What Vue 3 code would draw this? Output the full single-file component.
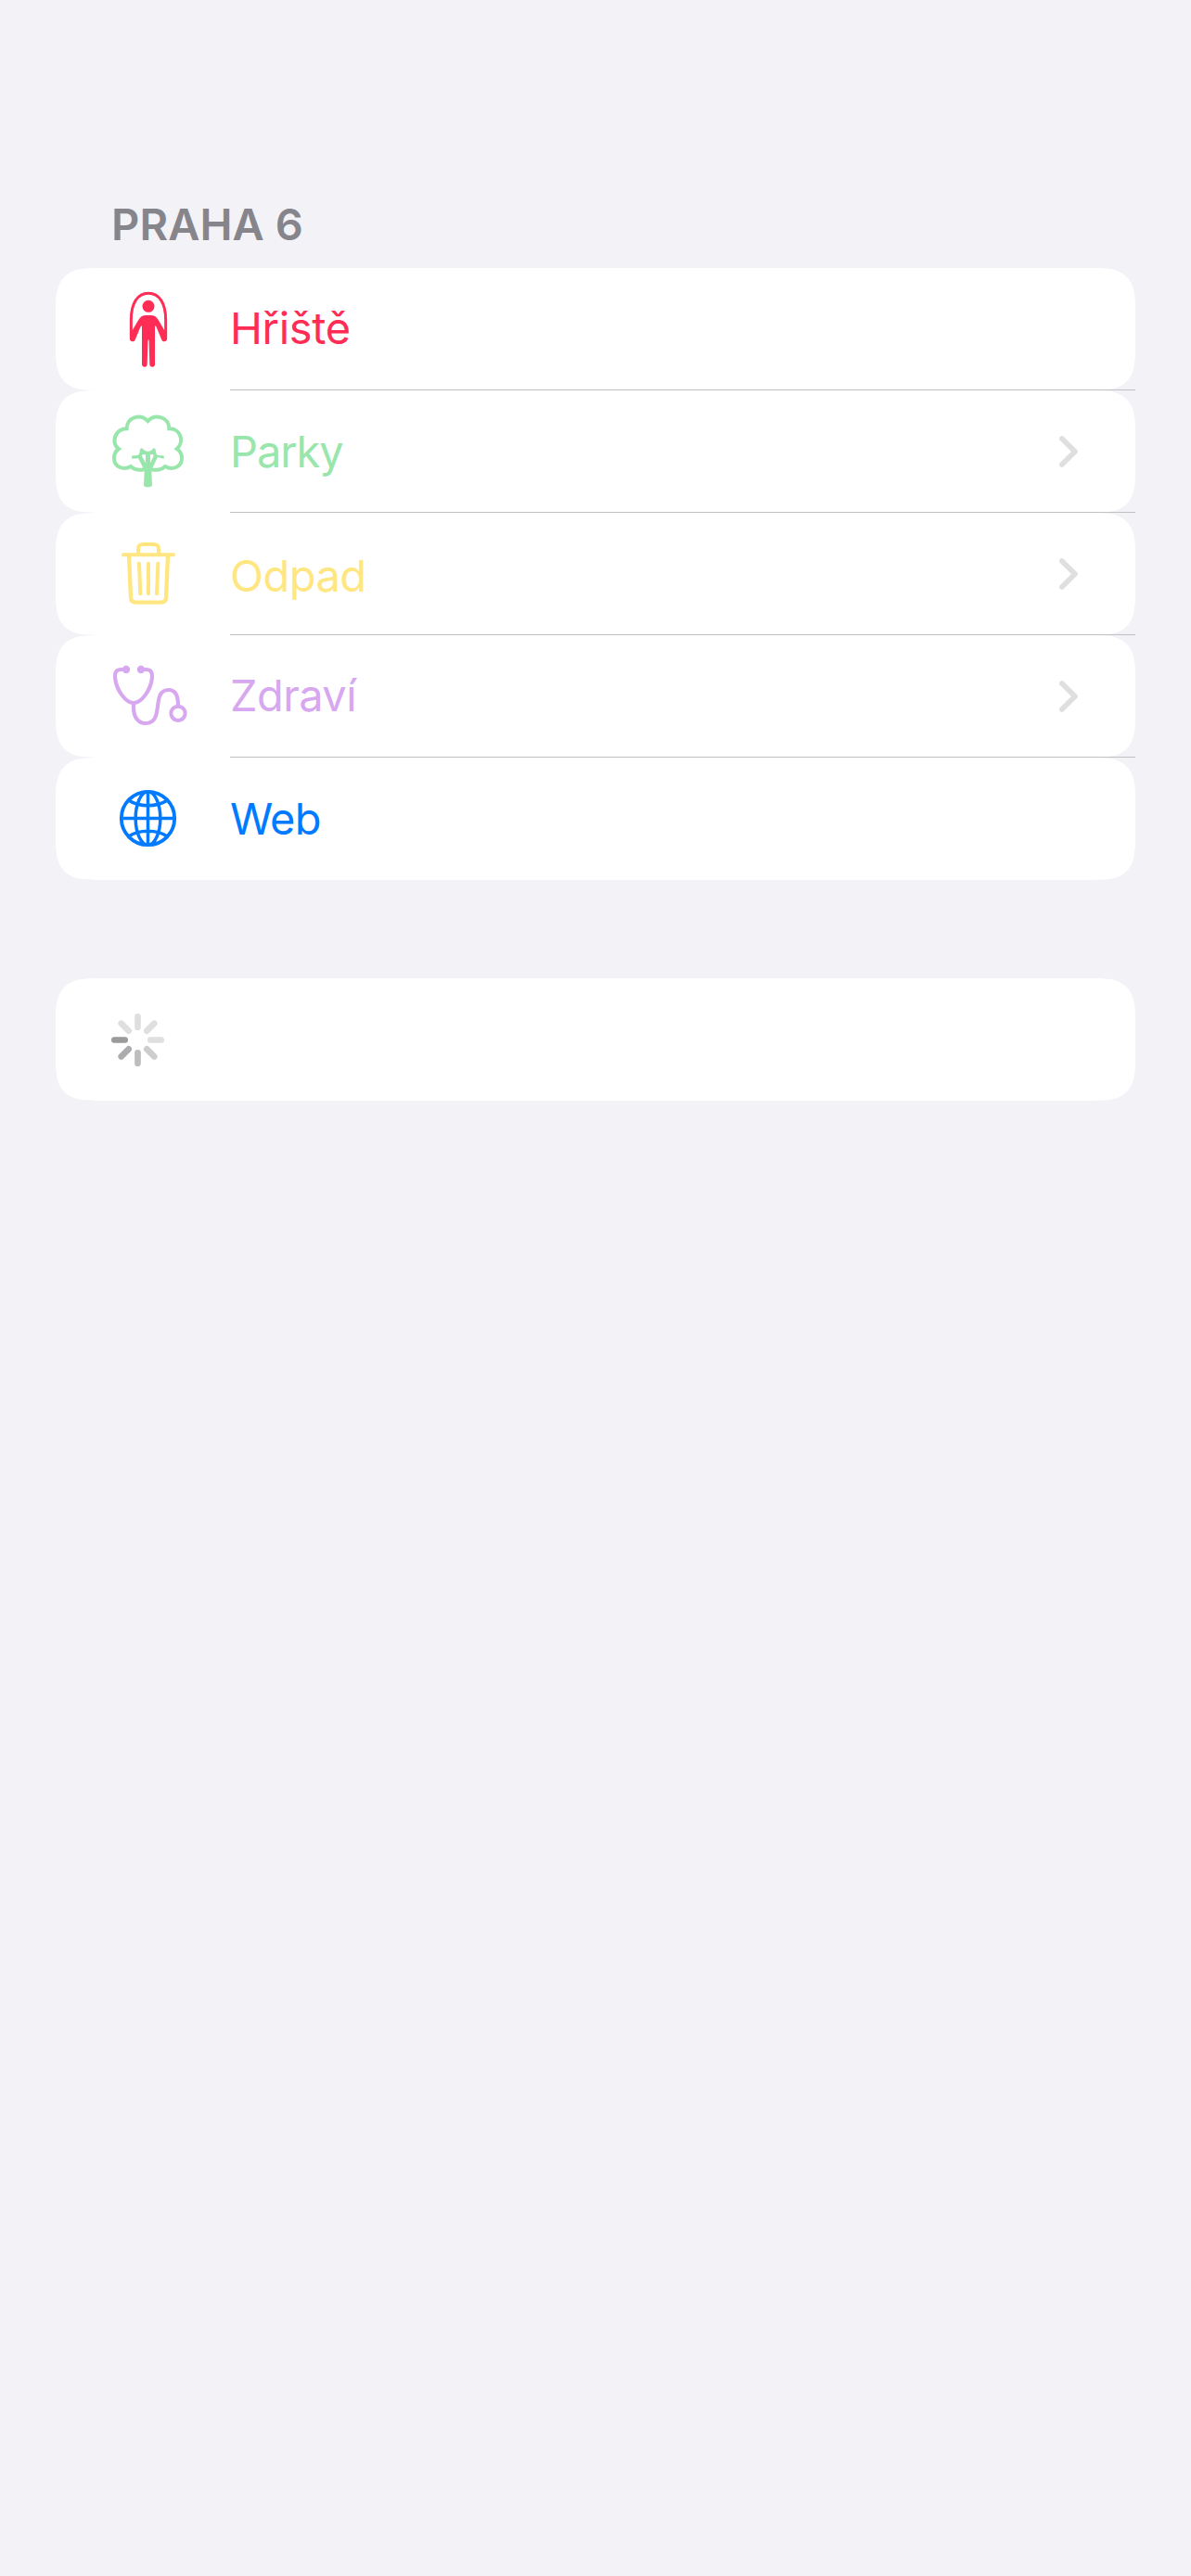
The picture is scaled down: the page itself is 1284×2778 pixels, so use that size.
<script setup>
const rows = [
  { id: 'playground', label: 'Hřiště', color: '#ff2d55', top: -33, shift: 0, spacing: -0.35, chevron: false },
  { id: 'parks', label: 'Parky', color: '#99e6ac', top: -42, shift: 1, spacing: -1.1, chevron: true },
  { id: 'waste', label: 'Odpad', color: '#ffe680', top: -51, shift: 3, spacing: -0.5, chevron: true },
  { id: 'health', label: 'Zdraví', color: '#d7a8ef', top: -45, shift: 0, spacing: -0.6, chevron: true },
  { id: 'web', label: 'Web', color: '#007aff', top: -54, shift: 1, spacing: -0.8, chevron: false },
]

const spokes = [
  { angle: 0, color: '#dfdfdf' },
  { angle: 45, color: '#dfdfdf' },
  { angle: 90, color: '#dfdfdf' },
  { angle: 135, color: '#cdcdcf' },
  { angle: 180, color: '#bdbdbf' },
  { angle: 225, color: '#acacae' },
  { angle: 270, color: '#9b9b9d' },
  { angle: 315, color: '#dfdfdf' },
]
</script>

<template>
  <main class="screen">
    <h2 class="section-title">PRAHA 6</h2>
    <ul class="list">
      <li v-for="row in rows" :key="row.id" class="card" :style="{ color: row.color }">
        <svg class="icon" :viewBox="`0 ${row.top} 300 396`" fill="none" stroke="currentColor" stroke-linecap="round" stroke-linejoin="round">
          <template v-if="row.id === 'playground'">
            <circle cx="150" cy="91" r="19.500" fill="currentColor" stroke="none" />
            <path d="M94 196V135C94 81 115 49 150 49S206 81 206 135V196" stroke-width="9" />
            <path d="M90 196V172C95 172 97 171 100 166L116 138C123 126 129 120 140 120H160C171 120 177 126 184 138L200 166C203 171 205 172 210 172V196C210 202 207 205 201 205C196 205 194 202 192 197L175 156Q171 150 171 160V278C171 284 168 287 163 287S154 284 154 278L152 205Q150 190 148 205L146 278C146 284 143 287 138 287S129 284 129 278V160Q129 150 125 156L108 197C106 202 104 205 99 205C93 205 90 202 90 196Z" fill="currentColor" stroke="none" />
          </template>
          <template v-else-if="row.id === 'parks'">
            <path stroke-width="12" stroke-linecap="butt" stroke-linejoin="miter" d="M136 214C118 218 103 213 93 204C68 218 39 205 39 178C39 164 44 154 54 147C36 134 37 110 50 95C58 86 68 82 80 82C79 45 124 31 148 57C173 31 218 45 217 82C253 80 268 124 242 147C253 154 258 164 258 178C258 205 229 218 204 204C194 213 179 218 161 214" />
            <path d="M137 221L135 264C135 269 140 271 148 271S162 269 162 264L160 221L165 205L180 174L199 179C203 174 200 169 195 169L181 168L176 164L172 146L167 145C160 153 155 155 148 155S137 153 130 145L124 146L120 164L115 168L100 169C95 170 94 178 99 179L117 178L131 205ZM131 165L141 166V193L129 170ZM156 166L165 165L167 170L156 193Z" fill="currentColor" fill-rule="evenodd" stroke="none" />
          </template>
          <template v-else-if="row.id === 'waste'">
            <path stroke-width="12" d="M69 85H231M117 83V66Q117 51 133 51H167Q183 51 183 66V83" />
            <path stroke-width="13" d="M87 87L93 224Q94 239 109 239H191Q206 239 207 224L213 87" />
            <path stroke-width="12" d="M120 113L124 211M150 113V211M181 113L177 211" />
          </template>
          <template v-else-if="row.id === 'health'">
            <circle cx="78" cy="66" r="12.500" fill="currentColor" stroke="none" />
            <circle cx="126" cy="66" r="12.500" fill="currentColor" stroke="none" />
            <path stroke-width="12.500" d="M78 66H62C47 66 41 74 42 90C45 133 77 174 102 174S159 133 162 90C163 74 157 66 142 66H126" />
            <path stroke-width="12.500" d="M102 174V190C102 219 116 240 141 240C204 240 157 132 215 132C237 132 246 150 246 180" />
            <circle cx="246" cy="208" r="23" stroke-width="12" />
          </template>
          <template v-else>
            <circle cx="148.500" cy="142.500" r="86" stroke-width="11.500" />
            <ellipse cx="148.500" cy="142.500" rx="40" ry="86" stroke-width="10.500" />
            <path stroke-width="10.500" d="M148.500 56V229M62 142.500H235M86 84C120 107 177 107 211 84M86 201C120 178 177 178 211 201" />
          </template>
        </svg>
        <div class="body">
          <span class="label" :style="{ paddingTop: row.shift * 2 + 'px', letterSpacing: row.spacing + 'px' }">{{ row.label }}</span>
          <svg v-if="row.chevron" class="chevron" viewBox="0 0 66 108" fill="none">
            <path d="M11.500 12L54 54L11.500 96" stroke="#dfdfe0" stroke-width="17" stroke-linecap="round" stroke-linejoin="round" />
          </svg>
        </div>
      </li>
    </ul>
    <section class="card loading">
      <svg class="spinner" viewBox="0 0 300 300">
        <rect v-for="s in spokes" :key="s.angle" x="135.500" y="69" width="20" height="54" rx="10" :fill="s.color" :transform="`rotate(${s.angle} 145.500 154.500)`" />
      </svg>
    </section>
  </main>
</template>

<style>
body {
  background: #f2f2f7;
}
</style>

<style scoped>
.screen {
  box-sizing: border-box;
  min-height: 2778px;
  padding: 212px 60px 0;
  background: #f2f2f7;
  font-family: Inter, sans-serif;
}
.section-title {
  margin: 0;
  padding-left: 60px;
  height: 77px;
  line-height: 60px;
  font-size: 47px;
  font-weight: 600;
  letter-spacing: 0.1px;
  color: #86858b;
}
.list {
  list-style: none;
  margin: 0;
  padding: 0;
}
.card {
  display: flex;
  height: 132px;
  background: #fff;
  border-radius: 31px;
}
@supports (corner-shape: superellipse(1.7)) {
  .card {
    border-radius: 46px;
    corner-shape: superellipse(1.6);
  }
}
.icon {
  flex: none;
  width: 100px;
  height: 132px;
  margin-left: 50px;
}
.body {
  box-sizing: border-box;
  flex: 1;
  display: flex;
  align-items: center;
  justify-content: space-between;
  height: 132px;
  margin-left: 38px;
  padding-right: 61px;
  border-bottom: 1px solid #c1c1c4;
}
.card:last-child .body {
  border-bottom-color: transparent;
}
.label {
  padding-bottom: 2px;
  font-size: 47px;
  line-height: 60px;
}
.chevron {
  width: 22px;
  height: 36px;
}
.loading {
  align-items: flex-start;
  margin-top: 106px;
}
.spinner {
  width: 100px;
  height: 100px;
  margin: 15px 0 0 40px;
}
</style>
